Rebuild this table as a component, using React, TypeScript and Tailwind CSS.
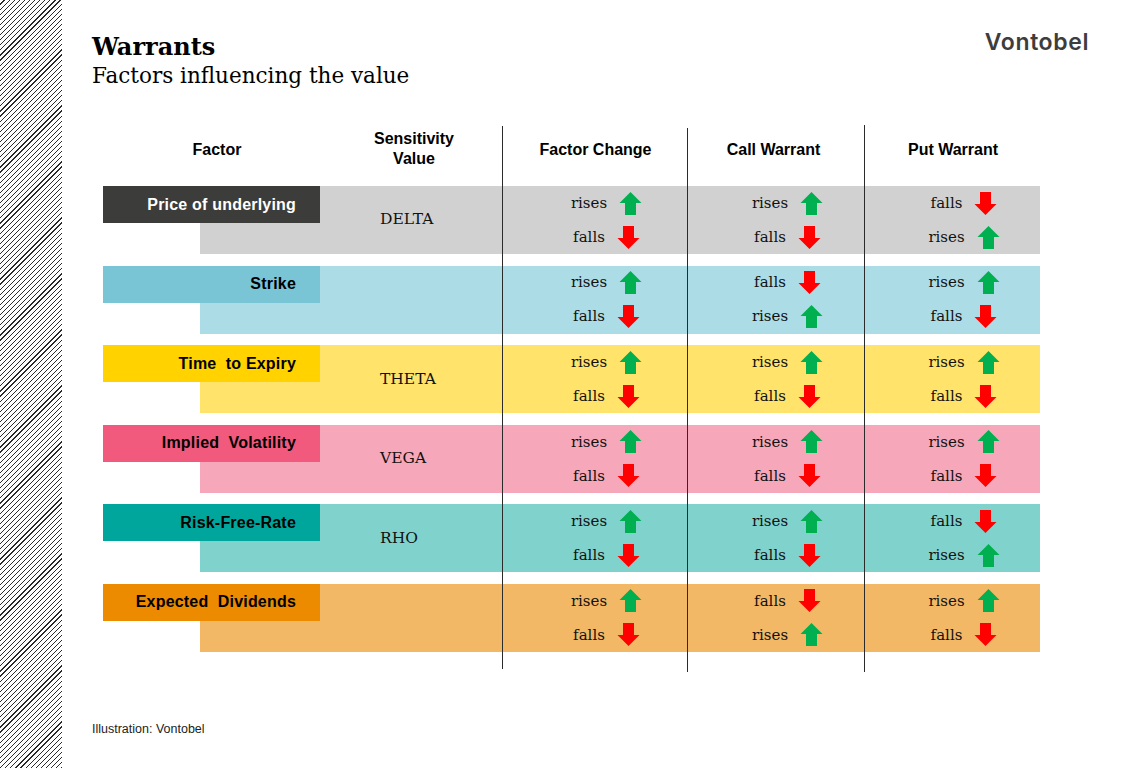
import React from 'react';

type Move = 'rises' | 'falls';

interface FactorRow {
  label: string;
  labelClass: string;
  bandClass: string;
  sensitivity: string;
  factorChange: [Move, Move];
  call: [Move, Move];
  put: [Move, Move];
}

const ROWS: FactorRow[] = [
  {
    label: 'Price of underlying',
    labelClass: 'bg-[#3c3c3b] text-white',
    bandClass: 'bg-[#d0d1d0]',
    sensitivity: 'DELTA',
    factorChange: ['rises', 'falls'],
    call: ['rises', 'falls'],
    put: ['falls', 'rises'],
  },
  {
    label: 'Strike',
    labelClass: 'bg-[#7ac5d5] text-black',
    bandClass: 'bg-[#acdce6]',
    sensitivity: '',
    factorChange: ['rises', 'falls'],
    call: ['falls', 'rises'],
    put: ['rises', 'falls'],
  },
  {
    label: 'Time  to Expiry',
    labelClass: 'bg-[#ffd200] text-black',
    bandClass: 'bg-[#ffe36b]',
    sensitivity: 'THETA',
    factorChange: ['rises', 'falls'],
    call: ['rises', 'falls'],
    put: ['rises', 'falls'],
  },
  {
    label: 'Implied  Volatility',
    labelClass: 'bg-[#f15a7d] text-black',
    bandClass: 'bg-[#f6a8ba]',
    sensitivity: 'VEGA',
    factorChange: ['rises', 'falls'],
    call: ['rises', 'falls'],
    put: ['rises', 'falls'],
  },
  {
    label: 'Risk-Free-Rate',
    labelClass: 'bg-[#00a69c] text-black',
    bandClass: 'bg-[#80d2cc]',
    sensitivity: 'RHO',
    factorChange: ['rises', 'falls'],
    call: ['rises', 'falls'],
    put: ['falls', 'rises'],
  },
  {
    label: 'Expected  Dividends',
    labelClass: 'bg-[#ec8b00] text-black',
    bandClass: 'bg-[#f2b866]',
    sensitivity: '',
    factorChange: ['rises', 'falls'],
    call: ['falls', 'rises'],
    put: ['rises', 'falls'],
  },
];

const serif = "font-['DejaVu_Serif','Liberation_Serif',serif]";
const sans = "font-['Liberation_Sans',Arial,sans-serif]";

function Arrow({ up }: { up: boolean }) {
  return up ? (
    <svg width="23" height="23" viewBox="0 0 23 23" className="shrink-0">
      <path d="M11.5 0 L22.5 11 L17 11 L17 23 L6 23 L6 11 L0.5 11 Z" fill="#00b050" />
    </svg>
  ) : (
    <svg width="23" height="23" viewBox="0 0 23 23" className="shrink-0">
      <path d="M6 0 L17 0 L17 12 L22.5 12 L11.5 23 L0.5 12 L6 12 Z" fill="#ff0000" />
    </svg>
  );
}

function ChangeCell({ moves }: { moves: [Move, Move] }) {
  return (
    <div className="flex flex-col">
      {moves.map((m, i) => (
        <div key={i} className="flex h-[34px] items-center justify-center gap-[12px] pl-[24px]">
          <span className={`${serif} text-[15px] text-[#111]`}>{m}</span>
          <Arrow up={m === 'rises'} />
        </div>
      ))}
    </div>
  );
}

function Row({ row }: { row: FactorRow }) {
  return (
    <div className="relative h-[68px]">
      <div className="flex h-full">
        <div className="w-[97px] shrink-0" />
        <div className={`grid flex-1 grid-cols-[120px_182px_185px_177px_176px] ${row.bandClass}`}>
          <div />
          <div className={`${serif} flex items-center pl-[60px] text-[15.5px] text-[#111]`}>
            {row.sensitivity}
          </div>
          <ChangeCell moves={row.factorChange} />
          <ChangeCell moves={row.call} />
          <ChangeCell moves={row.put} />
        </div>
      </div>
      {/* factor label sits over the band */}
      <div
        className={`absolute left-0 top-0 flex h-[37px] w-[217px] items-center justify-end pr-[24px] ${sans} whitespace-pre text-[16px] font-bold tracking-[0.2px] ${row.labelClass}`}
      >
        {row.label}
      </div>
    </div>
  );
}

export default function App() {
  return (
    <div className="flex h-[768px] w-[1122px] overflow-hidden bg-white">
      <div className="h-full w-[62px] shrink-0 bg-[repeating-linear-gradient(135deg,#ffffff_0px,#ffffff_2.8px,#2a2a2a_2.8px,#2a2a2a_3.6px)]" />

      <div className="flex flex-1 flex-col pl-[30px] pr-[33px]">
        <div className="flex items-start justify-between pt-[32px]">
          <div className={`${serif} leading-[29px] text-black`}>
            <div className="text-[24px] font-bold">Warrants</div>
            <div className="text-[21.5px]">Factors influencing the value</div>
          </div>
          <div className="pt-[1px] font-['Inter',sans-serif] text-[23px] font-semibold leading-[18px] tracking-[0.6px] text-[#3d3d3d]">
            Vontobel
          </div>
        </div>

        <div className="relative ml-[11px] mt-[38px] w-[937px]">
          <div className={`grid h-[42px] grid-cols-[217px_182px_185px_177px_176px] items-center text-center ${sans} text-[16px] font-bold leading-[20px] text-black`}>
            <div className="pl-[11px] pt-[2px]">Factor</div>
            <div className="pl-[6px]">
              Sensitivity
              <br />
              Value
            </div>
            <div className="pl-[2px] pt-[2px]">Factor Change</div>
            <div className="pr-[4px] pt-[2px]">Call Warrant</div>
            <div className="pl-[2px] pt-[2px]">Put Warrant</div>
          </div>

          <div className="mt-[16px] flex flex-col gap-[11.6px]">
            {ROWS.map((row) => (
              <Row key={row.label} row={row} />
            ))}
          </div>

          {/* column rules drawn across header and bands */}
          <div className="absolute left-[399px] top-[-2px] h-[543px] w-px bg-[#2b2b2b]" />
          <div className="absolute left-[584px] top-0 h-[544px] w-px bg-[#2b2b2b]" />
          <div className="absolute left-[761px] top-[-3px] h-[547px] w-px bg-[#2b2b2b]" />
        </div>

        <div className={`mt-auto pb-[31px] ${sans} text-[12.5px] leading-[16px] text-[#222]`}>
          Illustration: Vontobel
        </div>
      </div>
    </div>
  );
}
